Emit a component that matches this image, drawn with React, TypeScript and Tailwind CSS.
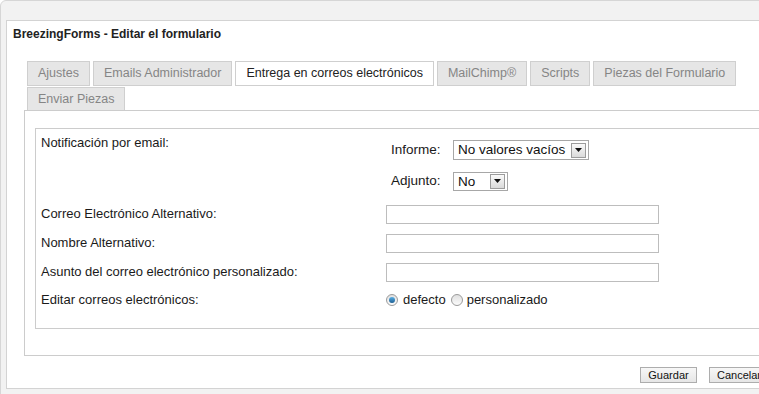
import React, { useState } from 'react';

const FONT = "font-['Liberation_Sans',Arial,sans-serif]";

const TABS = [
  'Ajustes',
  'Emails Administrador',
  'Entrega en correos electrónicos',
  'MailChimp®',
  'Scripts',
  'Piezas del Formulario',
  'Enviar Piezas',
];

const SelectBox: React.FC<{ value: string; width: string; height: string }> = ({
  value,
  width,
  height,
}) => (
  <div
    className={`${width} ${height} flex items-center justify-between border border-[#a7a7a7] bg-white pl-[4px] pr-[2px]`}
  >
    <span className="text-[13.5px] leading-none text-[#111]">{value}</span>
    <span className="w-[15px] h-[15px] flex items-center justify-center border border-[#9c9c9c] bg-gradient-to-b from-[#fafafa] to-[#dadada]">
      <svg width="7" height="4" viewBox="0 0 7 4">
        <path d="M0 0h7L3.5 4z" fill="#111" />
      </svg>
    </span>
  </div>
);

const Radio: React.FC<{ checked: boolean; onClick: () => void }> = ({
  checked,
  onClick,
}) => (
  <span
    onClick={onClick}
    className="w-[12px] h-[12px] rounded-full border border-[#9a9a9a] bg-gradient-to-b from-[#e0e0e0] to-[#fbfbfb] flex items-center justify-center cursor-pointer"
  >
    {checked && (
      <span className="w-[6px] h-[6px] rounded-full bg-gradient-to-b from-[#5ab0e6] to-[#1d5f92]" />
    )}
  </span>
);

export default function App() {
  const [active] = useState(2);
  const [mode, setMode] = useState('defecto');

  const rows = [
    'Correo Electrónico Alternativo:',
    'Nombre Alternativo:',
    'Asunto del correo electrónico personalizado:',
  ];

  return (
    <div className={`w-[759px] h-[394px] overflow-hidden bg-white ${FONT}`}>
      <div className="w-[820px] h-[420px] border border-[#d6d6d6] rounded-tl-[6px] bg-[#f2f2f2] pl-[5px] pt-[19px]">
        <div className="h-[369px] border border-r-0 border-[#d3d3d3] bg-white pl-[6px] pt-[5px]">
          <div className="text-[12px] leading-[16px] font-bold text-[#222]">
            BreezingForms - Editar el formulario
          </div>

          {/* tabs */}
          <div className="ml-[14px] mt-[19px] w-[715px] flex flex-wrap gap-x-[3px] gap-y-[1px]">
            {TABS.map((tab, i) => (
              <div
                key={tab}
                className={`h-[25px] px-[10px] flex items-center border border-[#cfcfcf] text-[12.5px] ${
                  i === active
                    ? 'bg-white text-[#222]'
                    : 'bg-[#e6e6e6] text-[#858585]'
                }`}
              >
                {tab}
              </div>
            ))}
          </div>

          <div className="relative -mt-[2px] ml-[11px] w-[760px] h-[246px] border border-r-0 border-[#cccccc] bg-white pl-[10px] pt-[17px]">
            <div className="h-[201px] border border-r-0 border-[#cccccc] pl-[5px] pt-[6px] text-[13px] text-[#1a1a1a]">
              <div className="flex">
                <div className="w-[345px] leading-[16px]">Notificación por email:</div>
                <div className="pt-[5px] flex flex-col gap-[11px]">
                  <div className="flex items-center">
                    <span className="w-[67px] pl-[5px] text-[13.5px]">Informe:</span>
                    <SelectBox value="No valores vacíos" width="w-[136px]" height="h-[20px]" />
                  </div>
                  <div className="flex items-center">
                    <span className="w-[67px] pl-[5px] text-[13.5px]">Adjunto:</span>
                    <SelectBox value="No" width="w-[55px]" height="h-[19px]" />
                  </div>
                </div>
              </div>

              <div className="mt-[13px] flex flex-col gap-[10px]">
                {rows.map((label) => (
                  <div key={label} className="flex items-center h-[19px]">
                    <span className="w-[345px]">{label}</span>
                    <input
                      type="text"
                      className="w-[273px] h-[19px] border border-[#bdbdbd] bg-white outline-none"
                    />
                  </div>
                ))}
              </div>

              <div className="mt-[10px] flex items-center h-[16px]">
                <span className="w-[345px]">Editar correos electrónicos:</span>
                <Radio checked={mode === 'defecto'} onClick={() => setMode('defecto')} />
                <span className="ml-[5px] mr-[5px]">defecto</span>
                <Radio
                  checked={mode === 'personalizado'}
                  onClick={() => setMode('personalizado')}
                />
                <span className="ml-[4px]">personalizado</span>
              </div>
            </div>
          </div>

          <div className="mt-[11px] ml-[627px] flex gap-[12px]">
            <button
              type="button"
              className="w-[57px] h-[16px] border border-[#adadad] bg-gradient-to-b from-[#f7f7f7] to-[#e6e6e6] text-[11px] leading-none text-[#111]"
            >
              Guardar
            </button>
            <button
              type="button"
              className="w-[60px] h-[16px] border border-[#adadad] bg-gradient-to-b from-[#f7f7f7] to-[#e6e6e6] text-[11px] leading-none text-[#111]"
            >
              Cancelar
            </button>
          </div>
        </div>
      </div>
    </div>
  );
}
